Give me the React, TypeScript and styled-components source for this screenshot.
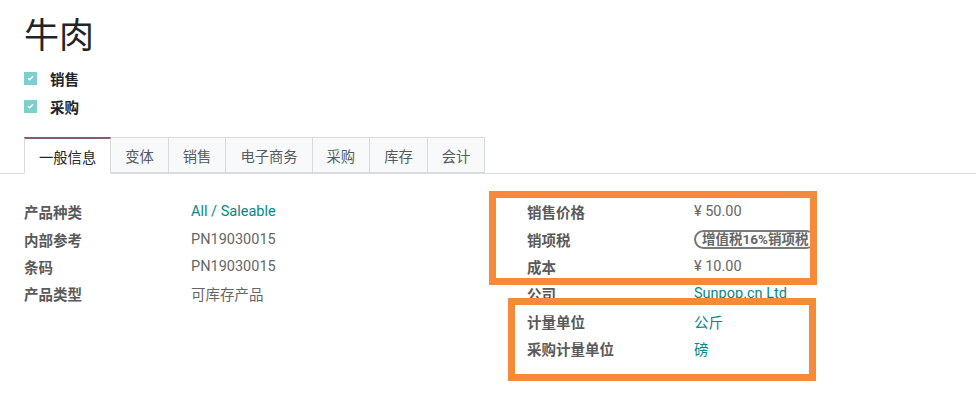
import React from "react";
import styled, { createGlobalStyle } from "styled-components";

const GlobalStyle = createGlobalStyle`
  body {
    margin: 0;
    background: #ffffff;
    font-family: Roboto, "Noto Sans CJK SC", sans-serif;
    font-size: 14.5px;
    color: #212529;
  }
`;

const Page = styled.div`
  position: relative;
  width: 976px;
  height: 394px;
  overflow: hidden;
  background: #ffffff;
`;

const Header = styled.div`
  padding: 16px 24px 0;
`;

const Title = styled.h1`
  margin: 0;
  font-size: 35px;
  line-height: 42px;
  font-weight: 400;
  color: #212529;
`;

const Flags = styled.div`
  margin-top: 6px;
  display: flex;
  flex-direction: column;
`;

const Flag = styled.label`
  display: flex;
  align-items: center;
  height: 28px;
  font-weight: 700;
  color: #212529;
`;

const Check = styled.span`
  width: 13px;
  height: 13px;
  margin-right: 13px;
  background: #7ccfcd;
  display: flex;
  align-items: center;
  justify-content: center;
`;

const TabBar = styled.div`
  margin-top: 17px;
  padding: 0 24px;
  display: flex;
  border-bottom: 1px solid #d8dadd;
`;

const Tab = styled.div<{ $active?: boolean }>`
  height: 34px;
  padding: 0 14px;
  display: flex;
  align-items: center;
  margin-bottom: -1px;
  font-size: 14.3px;
  border: 1px solid #d8dadd;
  border-left-width: ${({ $active }) => ($active ? "1px" : "0")};
  border-top: ${({ $active }) => ($active ? "2px solid #875a7b" : "1px solid #d8dadd")};
  border-bottom: 1px solid ${({ $active }) => ($active ? "#ffffff" : "#d8dadd")};
  background: ${({ $active }) => ($active ? "#ffffff" : "#f8f9fa")};
  color: ${({ $active }) => ($active ? "#212529" : "#555b61")};
`;

const Content = styled.div`
  padding: 24px 24px 0;
  display: grid;
  grid-template-columns: 503px 1fr;
`;

const Group = styled.div`
  display: grid;
  grid-template-columns: 167px 1fr;
  grid-auto-rows: 27.4px;
  align-items: center;
`;

const Label = styled.div`
  font-weight: 700;
  color: #5a5a5a;
  white-space: nowrap;
`;

const Value = styled.div<{ $link?: boolean }>`
  color: ${({ $link }) => ($link ? "#018a87" : "#666666")};
  white-space: nowrap;
`;

const Badge = styled.span`
  display: inline-block;
  border: 2px solid #7a7a7a;
  border-radius: 10px;
  padding: 0 6px;
  font-size: 13.5px;
  line-height: 15px;
  font-weight: 700;
  color: #666666;
  white-space: nowrap;
`;

const Highlight = styled.div<{ $x: number; $y: number; $w: number; $h: number }>`
  position: absolute;
  left: ${({ $x }) => $x}px;
  top: ${({ $y }) => $y}px;
  width: ${({ $w }) => $w}px;
  height: ${({ $h }) => $h}px;
  box-sizing: border-box;
  border: 7px solid #f68a39;
  pointer-events: none;
`;

const CheckMark = () => (
  <svg width="7" height="6" viewBox="0 0 7 6">
    <path d="M1 3.2 L2.8 4.8 L6 1.2" stroke="#ffffff" strokeWidth="1.4" fill="none" />
  </svg>
);

const tabs = ["一般信息", "变体", "销售", "电子商务", "采购", "库存", "会计"];

const App = () => {
  return (
    <Page>
      <GlobalStyle />
      <Header>
        <Title>牛肉</Title>
        <Flags>
          <Flag>
            <Check>
              <CheckMark />
            </Check>
            销售
          </Flag>
          <Flag>
            <Check>
              <CheckMark />
            </Check>
            采购
          </Flag>
        </Flags>
      </Header>
      <TabBar>
        {tabs.map((t, i) => (
          <Tab key={t} $active={i === 0}>
            {t}
          </Tab>
        ))}
      </TabBar>
      <Content>
        <Group>
          <Label>产品种类</Label>
          <Value $link>All / Saleable</Value>
          <Label>内部参考</Label>
          <Value>PN19030015</Value>
          <Label>条码</Label>
          <Value>PN19030015</Value>
          <Label>产品类型</Label>
          <Value>可库存产品</Value>
        </Group>
        <Group>
          <Label>销售价格</Label>
          <Value>¥ 50.00</Value>
          <Label>销项税</Label>
          <Value>
            <Badge>增值税16%销项税</Badge>
          </Value>
          <Label>成本</Label>
          <Value>¥ 10.00</Value>
          <Label>公司</Label>
          <Value $link>Sunpop.cn Ltd</Value>
          <Label>计量单位</Label>
          <Value $link>公斤</Value>
          <Label>采购计量单位</Label>
          <Value $link>磅</Value>
        </Group>
      </Content>
      <Highlight $x={489} $y={191} $w={328} $h={94} />
      <Highlight $x={508} $y={298} $w={308} $h={83} />
    </Page>
  );
};

export default App;
